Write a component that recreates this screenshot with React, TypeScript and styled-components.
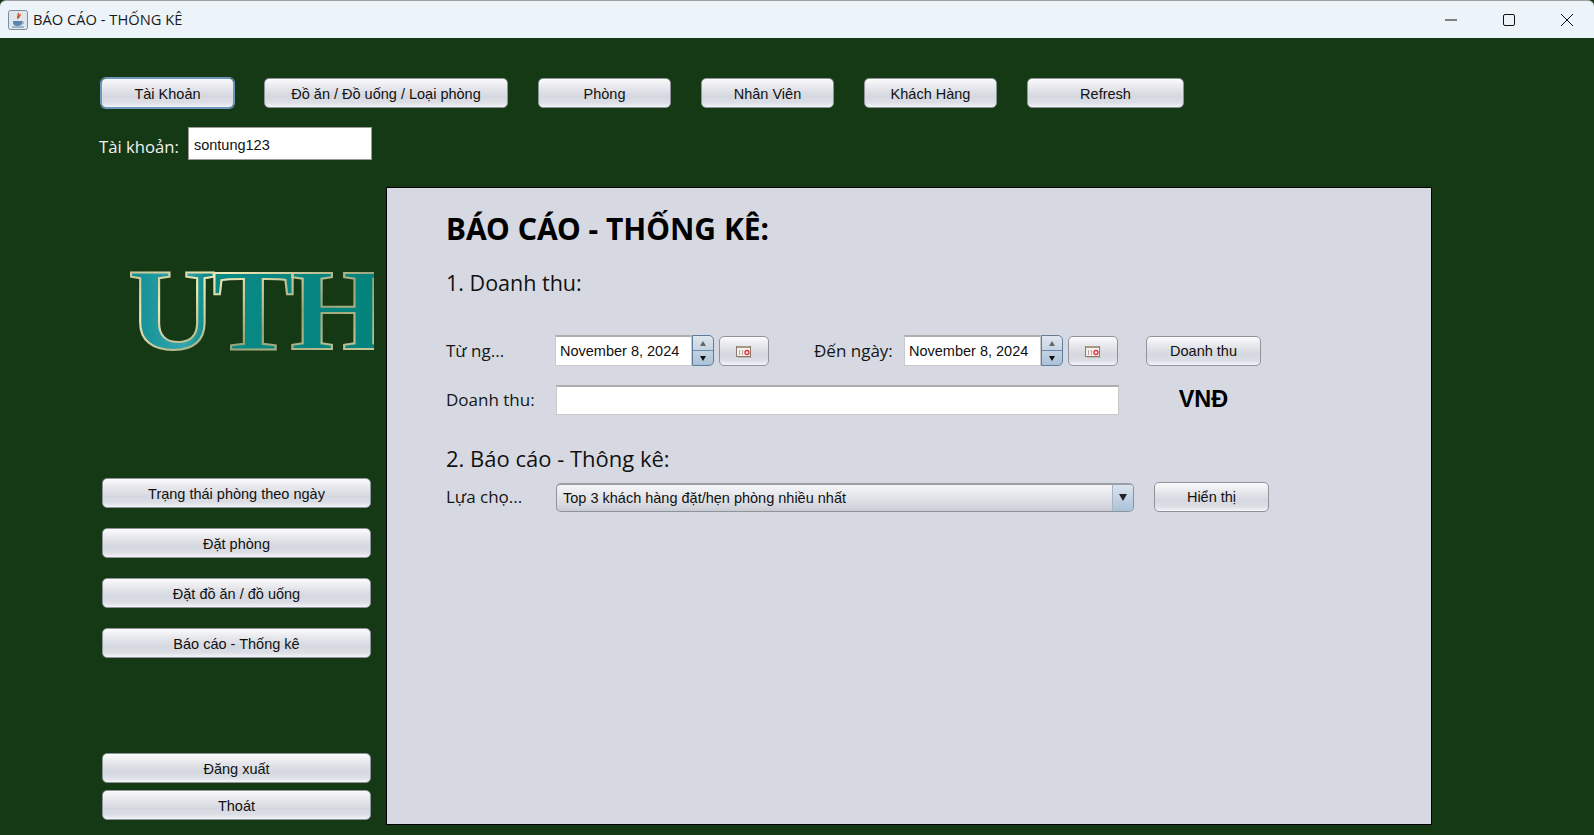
import styled, { createGlobalStyle } from "styled-components"

const GlobalStyle = createGlobalStyle`
  html, body {
    margin: 0;
    padding: 0;
    background: #153815;
  }
  * {
    box-sizing: border-box;
  }
`

const Window = styled.div`
  width: 1594px;
  height: 835px;
  background: #153815;
  display: flex;
  flex-direction: column;
  overflow: hidden;
`

const TitleBar = styled.div`
  height: 38px;
  flex: none;
  background: #ecf3f9;
  border-top: 1px solid #a0a0a0;
  border-radius: 6px 6px 0 0;
  display: flex;
  align-items: center;
  padding-left: 8px;
`

const AppIcon = styled.svg`
  width: 20px;
  height: 20px;
  margin-right: 5px;
`

const WindowTitle = styled.span`
  font: 14.7px "Open Sans", sans-serif;
  color: #1a1a1a;
  flex: 1;
  padding-bottom: 2px;
`

const WinButton = styled.div`
  width: 58px;
  height: 37px;
  display: flex;
  align-items: center;
  justify-content: center;
  &:last-child {
    margin-right: -2px;
  }
`

const Body = styled.div`
  flex: 1;
  display: flex;
  flex-direction: column;
  padding: 40px 0 0 99px;
`

const Toolbar = styled.div`
  display: flex;
  gap: 30px;
  padding-left: 2px;
`

const Button = styled.button<{ $w?: number; $focus?: boolean }>`
  width: ${p => (p.$w ? `${p.$w}px` : "100%")};
  height: 30px;
  flex: none;
  padding: 1px 0 0;
  border: 1px solid ${p => (p.$focus ? "#6f97bf" : "#8f939b")};
  box-shadow: ${p => (p.$focus ? "0 0 0 1px #6f97bf" : "none")};
  border-radius: 5px;
  background: linear-gradient(#fbfbfc 0%, #e4e5ea 35%, #d6d8e0 62%, #dddfe6 85%, #f4f5f8 100%);
  font: 14.5px "Liberation Sans", sans-serif;
  color: #111;
  display: flex;
  align-items: center;
  justify-content: center;
`

const AccountRow = styled.div`
  display: flex;
  align-items: center;
  margin-top: 19px;
  gap: 9px;
`

const AccountLabel = styled.span`
  font: 16.7px "Open Sans", sans-serif;
  color: #f2f2f2;
  padding-top: 6px;
`

const AccountInput = styled.div`
  width: 184px;
  height: 33px;
  background: #fff;
  border: 1px solid #9a9a9a;
  font: 14.5px "Liberation Sans", sans-serif;
  color: #111;
  padding: 2px 0 0 5px;
  display: flex;
  align-items: center;
`

const Main = styled.div`
  display: flex;
  margin-top: 27px;
  gap: 15px;
`

const Sidebar = styled.div`
  width: 272px;
  height: 638px;
  flex: none;
  padding-left: 3px;
  display: flex;
  flex-direction: column;
`

const LogoBox = styled.div`
  width: 272px;
  height: 291px;
  flex: none;
  overflow: hidden;
`

const SideGroup = styled.div`
  display: flex;
  flex-direction: column;
  gap: 20px;
`

const BottomGroup = styled.div`
  display: flex;
  flex-direction: column;
  gap: 7px;
  margin-top: auto;
  margin-bottom: 5px;
`

const Panel = styled.div`
  width: 1046px;
  height: 638px;
  flex: none;
  background: #d6d9e2;
  border: 1px solid #000;
  padding: 19px 0 0 59px;
`

const Heading = styled.h1`
  margin: 0;
  font: 700 30px/44px "Noto Sans", sans-serif;
  color: #000;
`

const SectionTitle = styled.h2<{ $top: number; $size?: number }>`
  margin: ${p => p.$top}px 0 0;
  font: 400 ${p => p.$size ?? 21.5}px/30px "Open Sans", sans-serif;
  color: #111;
`

const FormRow = styled.div<{ $top: number }>`
  display: flex;
  align-items: center;
  height: 31px;
  margin-top: ${p => p.$top}px;
`

const FieldLabel = styled.span<{ $w: number }>`
  width: ${p => p.$w}px;
  flex: none;
  font: 17px "Open Sans", sans-serif;
  color: #151515;
`

const DateField = styled.div`
  width: 137px;
  height: 31px;
  flex: none;
  background: #fff;
  border: 1px solid #c9c9c9;
  border-top: 2px solid #aeaeae;
  font: 14.5px "Liberation Sans", sans-serif;
  color: #111;
  padding-left: 4px;
  display: flex;
  align-items: center;
`

const Spinner = styled.div`
  width: 22px;
  height: 31px;
  flex: none;
  display: flex;
  flex-direction: column;
  border: 1px solid #5e7d9c;
  border-radius: 0 5px 5px 0;
  overflow: hidden;
  background: linear-gradient(#dfe6ee, #a9c1d8);
  margin-right: 5px;
`

const SpinCell = styled.div<{ $muted?: boolean }>`
  flex: 1;
  display: flex;
  align-items: center;
  justify-content: center;
  color: ${p => (p.$muted ? "#666" : "#111")};
  & + & {
    border-top: 1px solid #6f8aa5;
  }
`

const Triangle = styled.span<{ $down?: boolean; $size: number }>`
  width: 0;
  height: 0;
  border-left: ${p => p.$size}px solid transparent;
  border-right: ${p => p.$size}px solid transparent;
  ${p => (p.$down ? "border-top" : "border-bottom")}: ${p => Math.round(p.$size * 1.5)}px solid currentColor;
`

const CalIcon = styled.svg`
  width: 16px;
  height: 13px;
`

const Gap = styled.div<{ $w: number }>`
  width: ${p => p.$w}px;
  flex: none;
`

const RevenueInput = styled.div`
  width: 563px;
  height: 30px;
  flex: none;
  background: #fff;
  border: 1px solid #c9c9c9;
  border-top: 2px solid #aeaeae;
`

const Vnd = styled.span`
  width: 115px;
  margin-left: 27px;
  text-align: center;
  font: 700 23.5px "Liberation Sans", sans-serif;
  color: #000;
  padding-bottom: 1px;
`

const Combo = styled.div`
  width: 578px;
  height: 29px;
  flex: none;
  display: flex;
  margin-top: 1px;
  border: 1px solid #8f939b;
  border-top: 2px solid #9b9ea6;
  border-radius: 5px;
  overflow: hidden;
  background: linear-gradient(#f6f6f8, #e2e3e8 50%, #d3d5dc 85%, #c9cbd2);
`

const ComboText = styled.div`
  flex: 1;
  font: 14.5px "Liberation Sans", sans-serif;
  color: #111;
  padding-left: 6px;
  display: flex;
  align-items: center;
`

const ComboArrow = styled.div`
  width: 21px;
  background: linear-gradient(#dbe4ee, #a9c1d8);
  color: #222;
  display: flex;
  align-items: center;
  justify-content: center;
  border-left: 1px solid #a9b4c0;
`

const Calendar = () => (
  <CalIcon viewBox="0 0 16 13">
    <rect x="0.5" y="1.5" width="14" height="10" fill="#f4f1ea" stroke="#8a7a6a" />
    <rect x="1" y="1" width="13" height="2" fill="#a89a86" />
    <rect x="3" y="5" width="1" height="5" fill="#c8a0a0" />
    <rect x="6" y="5" width="1" height="5" fill="#c8a0a0" />
    <circle cx="11" cy="7.5" r="2" fill="none" stroke="#e03040" strokeWidth="1.3" />
    <rect x="2" y="12" width="14" height="1" fill="#bdbdbd" />
  </CalIcon>
)

const DatePicker = () => (
  <>
    <DateField>November 8, 2024</DateField>
    <Spinner>
      <SpinCell $muted><Triangle $size={3.5} /></SpinCell>
      <SpinCell><Triangle $down $size={3.5} /></SpinCell>
    </Spinner>
    <Button $w={50}><Calendar /></Button>
  </>
)

const topButtons = [
  { label: "Đồ ăn / Đồ uống / Loại phòng", w: 244 },
  { label: "Phòng", w: 133 },
  { label: "Nhân Viên", w: 133 },
  { label: "Khách Hàng", w: 133 },
  { label: "Refresh", w: 157 },
]

export default function App() {
  return (
    <Window>
      <GlobalStyle />
      <TitleBar>
        <AppIcon viewBox="0 0 20 20">
          <rect x="0.5" y="0.5" width="19" height="19" rx="2" fill="#dfe6ee" stroke="#7d8b9a" />
          <path d="M10 3c2 2-2 3 0 6M12 4c1 2-2 2-1 4" fill="none" stroke="#d9541e" strokeWidth="1.4" />
          <path d="M5 11h9v2c0 2-2 3-4.5 3S5 15 5 13z" fill="#5b84a8" />
          <path d="M14 11.5c2 0 2 2.5-.5 2.5" fill="none" stroke="#5b84a8" />
          <rect x="4" y="16.5" width="12" height="1" fill="#5b84a8" />
        </AppIcon>
        <WindowTitle>BÁO CÁO - THỐNG KÊ</WindowTitle>
        <WinButton>
          <svg width="12" height="12" viewBox="0 0 12 12"><path d="M0 6h12" stroke="#111" /></svg>
        </WinButton>
        <WinButton>
          <svg width="12" height="12" viewBox="0 0 12 12"><rect x="0.5" y="0.5" width="11" height="11" rx="1.5" fill="none" stroke="#111" /></svg>
        </WinButton>
        <WinButton>
          <svg width="12" height="12" viewBox="0 0 12 12"><path d="M0 0l12 12M12 0L0 12" stroke="#111" /></svg>
        </WinButton>
      </TitleBar>
      <Body>
        <Toolbar>
          <Button $w={133} $focus>Tài Khoản</Button>
          {topButtons.map(b => (
            <Button key={b.label} $w={b.w}>{b.label}</Button>
          ))}
        </Toolbar>
        <AccountRow>
          <AccountLabel>Tài khoản:</AccountLabel>
          <AccountInput>sontung123</AccountInput>
        </AccountRow>
        <Main>
          <Sidebar>
            <LogoBox>
              <svg width="272" height="291" viewBox="0 0 272 291">
                <defs>
                  <linearGradient id="logoFill" x1="0" x2="1" y1="0" y2="0">
                    <stop offset="0" stopColor="#0b8c90" />
                    <stop offset="0.22" stopColor="#36a5b0" />
                    <stop offset="0.31" stopColor="#0a8a86" />
                    <stop offset="1" stopColor="#04827c" />
                  </linearGradient>
                  <linearGradient id="logoEdge" x1="0" x2="1" y1="0" y2="1">
                    <stop offset="0" stopColor="#a9ad7e" />
                    <stop offset="0.3" stopColor="#f0e9b8" />
                    <stop offset="0.6" stopColor="#9aa57a" />
                    <stop offset="1" stopColor="#d8d2a0" />
                  </linearGradient>
                </defs>
                <text
                  transform="translate(26 162) scale(1.06 1)"
                  letterSpacing="-4"
                  fontFamily="'Liberation Serif', serif"
                  fontWeight="700"
                  fontSize="116"
                  fill="url(#logoFill)"
                  stroke="url(#logoEdge)"
                  strokeWidth="2"
                >
                  UTH
                </text>
              </svg>
            </LogoBox>
            <SideGroup>
              <Button>Trạng thái phòng theo ngày</Button>
              <Button>Đặt phòng</Button>
              <Button>Đặt đồ ăn / đồ uống</Button>
              <Button>Báo cáo - Thống kê</Button>
            </SideGroup>
            <BottomGroup>
              <Button>Đăng xuất</Button>
              <Button>Thoát</Button>
            </BottomGroup>
          </Sidebar>
          <Panel>
            <Heading>BÁO CÁO - THỐNG KÊ:</Heading>
            <SectionTitle $top={17}>1. Doanh thu:</SectionTitle>
            <FormRow $top={37}>
              <FieldLabel $w={109}>Từ ng...</FieldLabel>
              <DatePicker />
              <Gap $w={45} />
              <FieldLabel $w={90}>Đến ngày:</FieldLabel>
              <DatePicker />
              <Gap $w={28} />
              <Button $w={115}>Doanh thu</Button>
            </FormRow>
            <FormRow $top={18}>
              <FieldLabel $w={110}>Doanh thu:</FieldLabel>
              <RevenueInput />
              <Vnd>VNĐ</Vnd>
            </FormRow>
            <SectionTitle $top={28} $size={22}>2. Báo cáo - Thông kê:</SectionTitle>
            <FormRow $top={8}>
              <FieldLabel $w={110}>Lựa chọ...</FieldLabel>
              <Combo>
                <ComboText>Top 3 khách hàng đặt/hẹn phòng nhiều nhất</ComboText>
                <ComboArrow><Triangle $down $size={4.5} /></ComboArrow>
              </Combo>
              <Gap $w={20} />
              <Button $w={115}>Hiển thị</Button>
            </FormRow>
          </Panel>
        </Main>
      </Body>
    </Window>
  )
}
